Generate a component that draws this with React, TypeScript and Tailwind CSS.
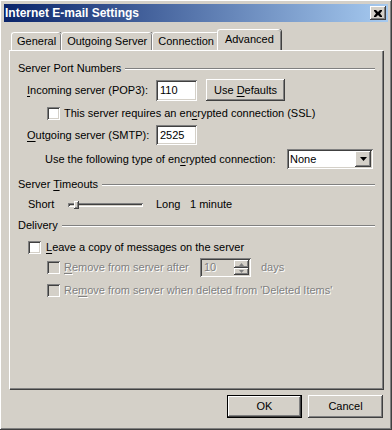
const raised =
  "shadow-[inset_-1px_-1px_#404040,inset_1px_1px_#ffffff,inset_-2px_-2px_#808080,inset_2px_2px_#d4d0c8]";
const sunken =
  "shadow-[inset_1px_1px_#808080,inset_-1px_-1px_#ffffff,inset_2px_2px_#404040,inset_-2px_-2px_#d4d0c8]";
const dim = "text-[#808080] [text-shadow:1px_1px_0_#ffffff]";

function U({ children }: { children: React.ReactNode }) {
  return <span className="underline underline-offset-[2px]">{children}</span>;
}

function Check({ disabled }: { disabled?: boolean }) {
  return (
    <div className={`h-[13px] w-[13px] shrink-0 ${sunken} ${disabled ? "bg-[#d4d0c8]" : "bg-white"}`} />
  );
}

function Group({ title, children }: { title: React.ReactNode; children?: React.ReactNode }) {
  return (
    <div>
      <div className="flex items-center gap-[4px]">
        <span className="whitespace-nowrap">{title}</span>
        <div className="mt-[1px] h-[2px] flex-1 border-t border-[#808080] border-b border-b-white" />
      </div>
      {children}
    </div>
  );
}

function Tab({ label, active }: { label: string; active?: boolean }) {
  return (
    <div
      className={`relative flex items-center rounded-t-[3px] border-l border-t border-white px-[5px] shadow-[inset_-1px_0_#808080,1px_0_#404040] ${
        active ? "z-10 -mx-[2px] h-[21px] px-[7px] pb-[2px]" : "h-[18px]"
      } bg-[#d4d0c8]`}
    >
      {label}
    </div>
  );
}

export default function App() {
  return (
    <div
      className={`flex h-[430px] w-[392px] flex-col bg-[#d4d0c8] p-[4px] text-[11px] leading-[13px] text-black ${raised}`}
      style={{ fontFamily: '"Liberation Sans", Arial, sans-serif' }}
    >
      {/* title bar */}
      <div className="flex h-[18px] items-center justify-between bg-[linear-gradient(90deg,#0a246a,#a6caf0)] pl-[1px] pr-[2px]">
        <span className="text-[12px] font-bold text-white">Internet E-mail Settings</span>
        <div className={`flex h-[14px] w-[16px] items-center justify-center bg-[#d4d0c8] ${raised}`}>
          <svg width="8" height="7" viewBox="0 0 8 7">
            <path d="M0 0h2l2 2 2-2h2v1L6 3.5 8 6v1H6L4 5 2 7H0V6l2-2.5L0 1z" fill="#000" />
          </svg>
        </div>
      </div>

      {/* tabs */}
      <div className="mt-[7px] flex items-end pl-[7px]">
        <Tab label="General" />
        <Tab label="Outgoing Server" />
        <Tab label="Connection" />
        <Tab label="Advanced" active />
      </div>

      {/* panel */}
      <div className="ml-[5px] mr-[5px] h-[339px] border-l border-t border-white px-[8px] pt-[11px] shadow-[inset_-1px_-1px_#808080,1px_1px_#404040]">
        <Group title="Server Port Numbers">
          <div className="mt-[4px] flex items-center pl-[9px]">
            <span className="w-[129px]">
              <U>I</U>ncoming server (POP3):
            </span>
            <div className={`flex h-[21px] w-[41px] items-center bg-white pl-[4px] ${sunken}`}>110</div>
            <div className={`ml-[9px] flex h-[22px] w-[79px] items-center justify-center ${raised}`}>
              <span>
                Use <U>D</U>efaults
              </span>
            </div>
          </div>
          <div className="mt-[6px] flex items-center gap-[4px] pl-[29px]">
            <Check />
            <span>
              This server requires an en<U>c</U>rypted connection (SSL)
            </span>
          </div>
          <div className="mt-[5px] flex items-center pl-[9px]">
            <span className="w-[129px]">
              <U>O</U>utgoing server (SMTP):
            </span>
            <div className={`flex h-[20px] w-[41px] items-center bg-white pl-[4px] ${sunken}`}>2525</div>
          </div>
          <div className="mt-[4px] flex items-center pl-[27px]">
            <span className="w-[242px]">
              Use the following type of en<U>c</U>rypted connection:
            </span>
            <div className={`flex h-[20px] w-[86px] items-center bg-white pl-[3px] pr-[2px] ${sunken}`}>
              <span className="flex-1">None</span>
              <div className={`flex h-[16px] w-[16px] items-center justify-center bg-[#d4d0c8] ${raised}`}>
                <svg width="7" height="4" viewBox="0 0 7 4">
                  <path d="M0 0h7L3.5 4z" fill="#000" />
                </svg>
              </div>
            </div>
          </div>
        </Group>

        <div className="mt-[9px]">
          <Group
            title={
              <>
                Server <U>T</U>imeouts
              </>
            }
          >
            <div className="mt-[7px] flex items-center pl-[10px]">
              <span className="w-[40px]">Short</span>
              <div className="relative h-[8px] w-[75px]">
                <div className={`absolute left-0 right-0 top-[2px] h-[4px] ${sunken}`} />
                <div className={`absolute left-[6px] top-0 h-[8px] w-[5px] bg-[#d4d0c8] ${raised}`} />
              </div>
              <span className="ml-[13px] w-[34px]">Long</span>
              <span>1 minute</span>
            </div>
          </Group>
        </div>

        <div className="mt-[8px]">
          <Group title="Delivery">
            <div className="mt-[9px] flex items-center gap-[5px] pl-[10px]">
              <Check />
              <span>
                <U>L</U>eave a copy of messages on the server
              </span>
            </div>
            <div className="mt-[4px] flex items-center pl-[29px]">
              <Check disabled />
              <span className={`ml-[4px] w-[136px] ${dim}`}>
                <U>R</U>emove from server after
              </span>
              <div className={`flex h-[19px] w-[51px] items-center pl-[4px] pr-[2px] ${sunken} ${dim}`}>
                <span className="flex-1">10</span>
                <div className="flex flex-col">
                  <div className={`flex h-[8px] w-[15px] items-center justify-center ${raised}`}>
                    <svg width="5" height="3" viewBox="0 0 5 3">
                      <path d="M2.5 0L5 3H0z" fill="#808080" />
                    </svg>
                  </div>
                  <div className={`flex h-[7px] w-[15px] items-center justify-center ${raised}`}>
                    <svg width="5" height="3" viewBox="0 0 5 3">
                      <path d="M0 0h5L2.5 3z" fill="#808080" />
                    </svg>
                  </div>
                </div>
              </div>
              <span className={`ml-[10px] ${dim}`}>days</span>
            </div>
            <div className="mt-[7px] flex items-center pl-[29px]">
              <Check disabled />
              <span className={`ml-[4px] ${dim}`}>
                Re<U>m</U>ove from server when deleted from 'Deleted Items'
              </span>
            </div>
          </Group>
        </div>
      </div>

      {/* buttons */}
      <div className="mt-[6px] flex justify-end gap-[6px] pr-[5px]">
        <div className="flex h-[23px] w-[75px] items-center justify-center border border-black shadow-[inset_-1px_-1px_#404040,inset_1px_1px_#ffffff,inset_-2px_-2px_#808080]">
          OK
        </div>
        <div className={`flex h-[23px] w-[75px] items-center justify-center ${raised}`}>Cancel</div>
      </div>
    </div>
  );
}
